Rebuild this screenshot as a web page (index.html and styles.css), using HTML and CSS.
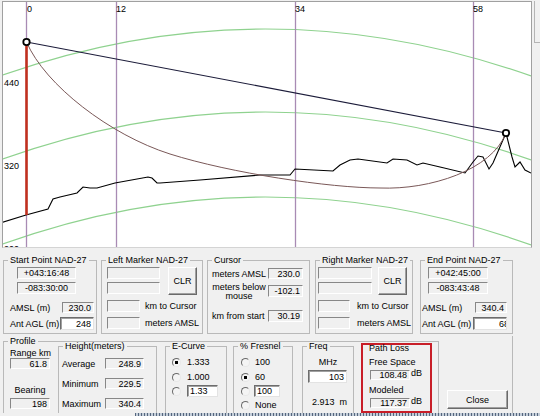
FILE: index.html
```html
<!DOCTYPE html>
<html lang="en">
<head>
<meta charset="UTF-8" />
<meta name="viewport" content="width=device-width, initial-scale=1" />
<title>Path Profile</title>
<link rel="stylesheet" href="styles.css">
</head>
<body>
  <div class="top">
    <div class="chart">
      <svg class="plot" width="528" height="245" viewBox="3 2 528 245">
        <!-- earth curvature bands -->
        <g fill="none" stroke="#8fd28f" stroke-width="1.2">
          <path d="M0,76 Q265,-18 531,76" />
          <path d="M0,160 Q265,64 531,160" />
          <path d="M0,245 Q265,149 531,245" />
        </g>
        <!-- marker lines -->
        <g stroke="#a98bb4" stroke-width="1.3">
          <line x1="26.5" y1="2" x2="26.5" y2="247" />
          <line x1="116.5" y1="2" x2="116.5" y2="247" />
          <line x1="295.5" y1="2" x2="295.5" y2="247" />
          <line x1="473.5" y1="2" x2="473.5" y2="247" />
        </g>
        <!-- terrain -->
        <polyline fill="none" stroke="#000" stroke-width="1.1"
          points="0,223 26,215 48,209 53,199 60,197 77,193 83,187 90,188 97,188 115,183 148,177 152,178 157,183 160,183 200,180 260,175 290,175 295,169 333,171 340,165 350,160 358,159 387,163 393,159 407,160 417,165 423,163 440,167 465,173 473,162 478,156 483,157 489,169 493,163 506,133 512,157 515,167 520,162 525,170 531,173" />
        <!-- fresnel curve -->
        <path fill="none" stroke="#7a5858" stroke-width="1"
          d="M26.5,42 C45,85 110,135 170,154 C230,173 330,188 380,188 C430,190 492,170 506,133" />
        <!-- line of sight -->
        <line x1="26.5" y1="42" x2="506" y2="133" stroke="#1c1c3a" stroke-width="1.1" />
        <line x1="26.5" y1="44" x2="26.5" y2="215" stroke="#c0301f" stroke-width="2.6" />
        <circle cx="26.5" cy="42" r="3.2" fill="#fff" stroke="#000" stroke-width="1.8" />
        <circle cx="506" cy="133" r="3.2" fill="#fff" stroke="#000" stroke-width="1.8" />
        <g class="axis">
          <text x="27" y="12">0</text>
          <text x="116" y="12">12</text>
          <text x="295" y="12">34</text>
          <text x="473" y="12">58</text>
          <text x="4" y="86">440</text>
          <text x="4" y="169">320</text>
          <text x="4" y="252">200</text>
        </g>
      </svg>
    </div>
    <div class="side"><div class="thumb"></div></div>
  </div>

  <div class="markers">
    <fieldset class="group start">
      <legend>Start Point NAD-27</legend>
      <div class="field coord">+043:16:48</div>
      <div class="field coord">-083:30:00</div>
      <div class="row elev"><span>AMSL (m)</span><div class="field num">230.0</div></div>
      <div class="row agl"><span>Ant AGL (m)</span><div class="field edit num">248</div></div>
    </fieldset>

    <fieldset class="group marker left">
      <legend>Left Marker NAD-27</legend>
      <div class="marker-top">
        <div class="blanks">
          <div class="field blank"></div>
          <div class="field blank"></div>
        </div>
        <button class="btn clr">CLR</button>
      </div>
      <div class="row small"><div class="field"></div><span>km to Cursor</span></div>
      <div class="row small"><div class="field"></div><span>meters AMSL</span></div>
    </fieldset>

    <fieldset class="group cursor">
      <legend>Cursor</legend>
      <div class="row c1"><span>meters AMSL</span><div class="field num">230.0</div></div>
      <div class="row c2"><span class="two">meters below<br>mouse</span><div class="field num">-102.1</div></div>
      <div class="row c3"><span>km from start</span><div class="field num">30.19</div></div>
    </fieldset>

    <fieldset class="group marker right">
      <legend>Right Marker NAD-27</legend>
      <div class="marker-top">
        <div class="blanks">
          <div class="field blank"></div>
          <div class="field blank"></div>
        </div>
        <button class="btn clr">CLR</button>
      </div>
      <div class="row small"><div class="field"></div><span>km to Cursor</span></div>
      <div class="row small"><div class="field"></div><span>meters AMSL</span></div>
    </fieldset>

    <fieldset class="group start end">
      <legend>End Point NAD-27</legend>
      <div class="field coord">+042:45:00</div>
      <div class="field coord">-083:43:48</div>
      <div class="row elev"><span>AMSL (m)</span><div class="field num">340.4</div></div>
      <div class="row agl"><span>Ant AGL (m)</span><div class="field edit num"><span class="cut">68</span></div></div>
    </fieldset>
  </div>

  <div class="bottom">
    <fieldset class="group profile">
      <legend>Profile</legend>
      <div class="sub">
        <div class="range">
          <div class="cap">Range km</div>
          <div class="field num">61.8</div>
          <div class="cap bearing">Bearing</div>
          <div class="field num">198</div>
        </div>

        <fieldset class="group heights">
          <legend>Height(meters)</legend>
          <div class="row"><span>Average</span><div class="field num">248.9</div></div>
          <div class="row"><span>Minimum</span><div class="field num">229.5</div></div>
          <div class="row"><span>Maximum</span><div class="field num">340.4</div></div>
        </fieldset>

        <fieldset class="group opts ecurve">
          <legend>E-Curve</legend>
          <div class="opt"><span class="radio on"></span>1.333</div>
          <div class="opt"><span class="radio"></span>1.000</div>
          <div class="opt"><span class="radio"></span><div class="field edit">1.33</div></div>
        </fieldset>

        <fieldset class="group opts fresnel">
          <legend>% Fresnel</legend>
          <div class="opt"><span class="radio"></span>100</div>
          <div class="opt"><span class="radio on"></span>60</div>
          <div class="opt"><span class="radio"></span><div class="field edit">100</div></div>
          <div class="opt"><span class="radio"></span>None</div>
        </fieldset>

        <fieldset class="group freq">
          <legend>Freq</legend>
          <div class="mhz">MHz</div>
          <div class="field edit num">103</div>
          <div class="wave">2.913&nbsp;&nbsp;m</div>
        </fieldset>

        <div class="pathloss">
          <div class="pl-title">Path Loss</div>
          <div class="pl-cap">Free Space</div>
          <div class="pl-row"><div class="field num">108.48</div><span>dB</span></div>
          <div class="pl-cap">Modeled</div>
          <div class="pl-row"><div class="field num">117.37</div><span>dB</span></div>
        </div>
      </div>
    </fieldset>

    <div class="close-area">
      <button class="btn close">Close</button>
    </div>
  </div>
  <div class="taskbar"></div>
</body>
</html>
```

FILE: styles.css
```css
/* Reset and base */
*, *::before, *::after {
  box-sizing: border-box;
}
body {
  margin: 0;
  width: 540px;
  height: 416px;
  overflow: hidden;
  background: #f0f0f0;
  font-family: 'Liberation Sans', Arial, sans-serif;
  font-size: 9px;
  color: #000;
}

/* Chart */
.top {
  display: flex;
  height: 248px;
}
.chart {
  margin: 1px 0 0 2px;
  width: 530px;
  height: 247px;
  border: 1px solid #a0a0a0;
  border-bottom-color: #d4d4d4;
  background: #fff;
}
.plot {
  display: block;
}
.axis text {
  font-size: 9px;
  fill: #000;
}
.side {
  flex: 1;
  margin-top: 1px;
  padding-left: 2px;
}
.thumb {
  height: 42px;
  border-left: 1px solid #b4b4b4;
  border-bottom: 1px solid #b4b4b4;
}

/* Group boxes */
.group {
  margin: 0;
  padding: 0;
  min-width: 0;
  border: 1px solid #b9b9b9;
}
.group legend {
  margin-left: 4px;
  padding: 0 2px;
  line-height: 11px;
}
.row {
  display: flex;
  align-items: center;
}

/* Fields and buttons */
.field {
  display: flex;
  align-items: center;
  padding: 0 2px;
  background: #f0f0f0;
  border: 1px solid;
  border-color: #878787 #fff #fff #878787;
  white-space: nowrap;
  overflow: hidden;
}
.num {
  justify-content: flex-end;
}
.edit {
  background: #fff;
  border-color: #6d6d6d #e3e3e3 #e3e3e3 #6d6d6d;
  box-shadow: inset 1px 1px #a0a0a0;
}
.btn {
  margin: 0;
  padding: 0;
  font: inherit;
  color: #000;
  background: #f0f0f0;
  border: 1px solid;
  border-color: #fff #6a6a6a #6a6a6a #fff;
  box-shadow: inset -1px -1px #a0a0a0;
}

/* Row 1: points and markers */
.markers {
  display: flex;
  height: 86px;
  padding: 7px 0 0 3px;
}
.markers .group {
  height: 79px;
}
.start {
  width: 94px;
}
.coord {
  justify-content: center;
  width: 59px;
  height: 12px;
  margin: 1px 0 0 13px;
}
.coord + .coord {
  margin-top: 3px;
}
.start .row {
  justify-content: space-between;
  padding: 0 2px 0 6px;
}
.elev {
  height: 11px;
  margin-top: 8px;
}
.elev .field {
  width: 32px;
  height: 11px;
}
.agl {
  height: 13px;
  margin-top: 4px;
}
.agl .field {
  width: 34px;
  height: 13px;
}
.start.end {
  width: 93px;
  margin-left: 7px;
}
.end .coord {
  width: 60px;
  margin-left: 7px;
}
.start.end .row {
  padding: 0 5px 0 1px;
}
.cut {
  margin-right: -5px;
}

.marker.left {
  width: 102px;
  margin-left: 4px;
}
.marker.right {
  width: 98px;
  margin-left: 5px;
}
.marker-top {
  display: flex;
  align-items: flex-start;
  margin-top: 1px;
}
.blank {
  width: 53px;
  height: 12px;
}
.blank + .blank {
  margin-top: 3px;
}
.left .blanks {
  margin-left: 5px;
}
.right .blanks {
  margin-left: 2px;
}
.right .blank {
  width: 54px;
}
.clr {
  width: 29px;
  height: 28px;
  margin-left: 8px;
}
.right .clr {
  margin-left: 6px;
}
.small {
  height: 12px;
  margin-top: 5px;
}
.small .field {
  width: 33px;
  height: 12px;
}
.left .small {
  gap: 5px;
  padding-left: 5px;
}
.right .small {
  gap: 7px;
  padding-left: 2px;
}
.right .small .field {
  width: 32px;
}

.cursor {
  width: 103px;
  margin-left: 4px;
}
.cursor .row {
  justify-content: space-between;
  padding: 0 6px 0 4px;
}
.cursor .field {
  width: 35px;
  height: 12px;
}
.c1 {
  height: 11px;
  margin-top: 2px;
}
.cursor .c1 .field {
  height: 11px;
}
.cursor .c2 {
  align-items: flex-start;
  margin-top: 4px;
}
.two {
  width: 54px;
  line-height: 9px;
  text-align: center;
}
.c2 .field {
  margin-top: 2px;
}
.c3 {
  height: 12px;
  margin-top: 9px;
}

/* Row 2: profile */
.bottom {
  display: flex;
  height: 77px;
  margin-top: 2px;
  padding-left: 3px;
  overflow: hidden;
}
.profile {
  flex: none;
  width: 436px;
  height: 90px;
}
.sub {
  display: flex;
  align-items: flex-start;
  margin-top: -6px;
}
.sub .group {
  flex: none;
  height: 80px;
}
.range {
  flex: none;
  width: 42px;
  margin-left: 6px;
}
.range .cap {
  margin-top: 7px;
  line-height: 10px;
}
.range .field {
  width: 40px;
  height: 11px;
}
.range .bearing {
  width: 40px;
  margin: 16px 0 3px;
  text-align: center;
}

.heights {
  width: 99px;
  margin-left: 6px;
}
.heights .row {
  justify-content: space-between;
  height: 11px;
  margin-top: 9px;
  padding: 0 12px 0 3px;
}
.heights .row:first-of-type {
  margin-top: 6px;
}
.heights .field {
  width: 39px;
  height: 11px;
}

.opt {
  display: flex;
  align-items: center;
  height: 10px;
  margin-top: 5px;
}
.ecurve {
  width: 62px;
  margin-left: 8px;
}
.ecurve .opt {
  gap: 6px;
  padding-left: 6px;
}
.fresnel {
  width: 60px;
  margin-left: 6px;
}
.fresnel .opt {
  gap: 5px;
  padding-left: 7px;
}
.opt:nth-of-type(3) {
  height: 12px;
  margin-top: 3px;
}
.opt:nth-of-type(4) {
  margin-top: 3px;
}
.opt .field {
  height: 12px;
  width: 31px;
}
.fresnel .opt .field {
  width: 26px;
  margin-left: -1px;
}
.radio {
  flex: none;
  width: 9px;
  height: 9px;
  border-radius: 50%;
  border: 1px solid;
  border-color: #6a6a6a #e8e8e8 #e8e8e8 #6a6a6a;
  background: #f4f4f4;
}
.radio.on {
  background: radial-gradient(circle, #000 0 1.4px, #f4f4f4 1.9px);
}

.freq {
  width: 52px;
  margin-left: 9px;
}
.mhz {
  margin-top: 5px;
  line-height: 10px;
  text-align: center;
}
.freq .field {
  width: 39px;
  height: 13px;
  margin: 3px 0 0 5px;
}
.wave {
  margin-top: 14px;
  padding-left: 9px;
  line-height: 10px;
}

.pathloss {
  flex: none;
  width: 71px;
  height: 70px;
  margin: 2px 0 0 7px;
  padding-left: 6px;
  border: 2px solid #c81e28;
}
.pl-title {
  margin-top: -2px;
  line-height: 10px;
}
.pl-cap {
  margin-top: 4px;
  line-height: 10px;
}
.pl-row + .pl-cap {
  margin-top: 5px;
}
.pl-row {
  display: flex;
  align-items: flex-start;
  margin: 3px 0 0 1px;
}
.pl-row .field {
  width: 40px;
  height: 10px;
}
.pl-row span {
  margin: -1px 0 0 1px;
  line-height: 9px;
}

.close-area {
  flex: none;
  width: 74px;
  height: 90px;
  border-right: 1px solid #b9b9b9;
}
.close {
  width: 61px;
  height: 19px;
  margin: 54px 0 0 8px;
}

.taskbar {
  height: 3px;
  margin-left: 135px;
  background: repeating-linear-gradient(90deg, #55667e 0 1px, #c3cdd8 1px 3px);
}
```
